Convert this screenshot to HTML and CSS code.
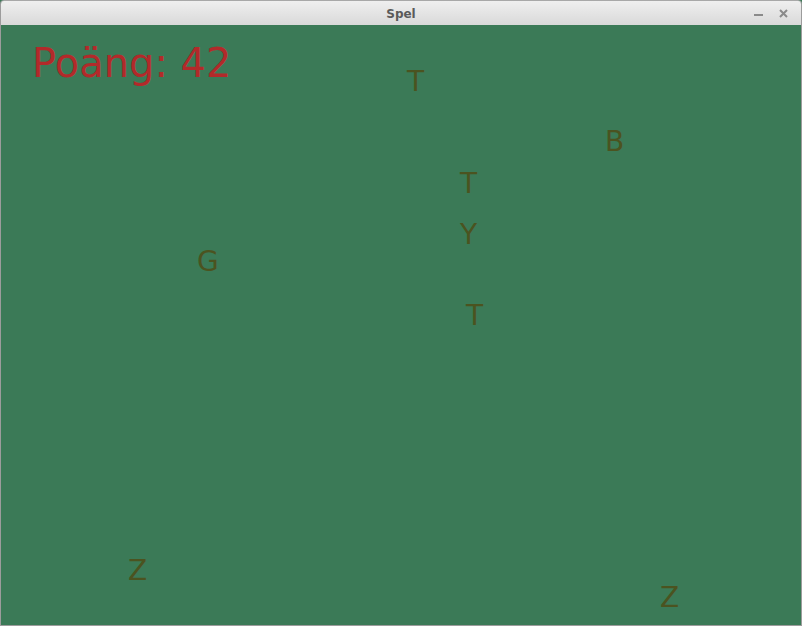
FILE: index.html
```html
<!DOCTYPE html>
<html>
<head>
<meta charset="utf-8">
<link rel="stylesheet" href="styles.css">
</head>
<body>
<div class="window">
  <div class="titlebar">
    <span class="title">Spel</span>
    <div class="controls">
      <span class="min"></span>
      <svg class="close" width="9" height="9" viewBox="0 0 9 9"><path d="M1 1 L8 8 M8 1 L1 8" stroke="#8a8a8a" stroke-width="2"/></svg>
    </div>
  </div>
  <div class="canvas">
    <div class="score">Poäng: 42</div>
    <span class="letter" style="left:406px;top:43px">T</span>
    <span class="letter" style="left:604px;top:103px">B</span>
    <span class="letter" style="left:459px;top:145px">T</span>
    <span class="letter" style="left:459px;top:196px">Y</span>
    <span class="letter" style="left:196px;top:223px">G</span>
    <span class="letter" style="left:465px;top:277px">T</span>
    <span class="letter" style="left:127px;top:532px">Z</span>
    <span class="letter" style="left:659px;top:559px">Z</span>
  </div>
</div>
</body>
</html>
```

FILE: styles.css
```css
html, body {
  margin: 0;
  padding: 0;
  width: 802px;
  height: 626px;
  overflow: hidden;
  background: #3b7a57;
}
.window {
  width: 802px;
  height: 626px;
  display: flex;
  flex-direction: column;
  box-sizing: border-box;
  border: 1px solid #9c9c9c;
  border-top: none;
  border-radius: 4px 4px 0 0;
  overflow: hidden;
}
.titlebar {
  height: 25px;
  flex: none;
  box-sizing: border-box;
  margin: 0 -1px;
  border: 1px solid #a8a8a8;
  border-bottom: none;
  border-radius: 4px 4px 0 0;
  background: linear-gradient(#efefef, #d9d9d9);
  position: relative;
  display: flex;
  align-items: center;
  justify-content: center;
}
.title {
  font-family: "DejaVu Sans", sans-serif;
  font-weight: bold;
  font-size: 12px;
  color: #5a5a5a;
  margin-top: 1px;
}
.controls {
  position: absolute;
  right: 13px;
  top: 8px;
  display: flex;
  align-items: center;
  gap: 16px;
}
.min {
  display: block;
  width: 9px;
  height: 2px;
  background: #8a8a8a;
  margin-top: 3px;
}
.close {
  display: block;
}
.canvas {
  flex: 1;
  position: relative;
  background: #3b7a57;
  padding: 18px 0 0 31px;
}
.score {
  font-family: "DejaVu Sans", sans-serif;
  font-size: 40px;
  line-height: 1;
  color: #b22a2a;
}
.letter {
  position: absolute;
  font-family: "DejaVu Sans", sans-serif;
  font-size: 28px;
  line-height: 1;
  color: #4b5320;
}
```
